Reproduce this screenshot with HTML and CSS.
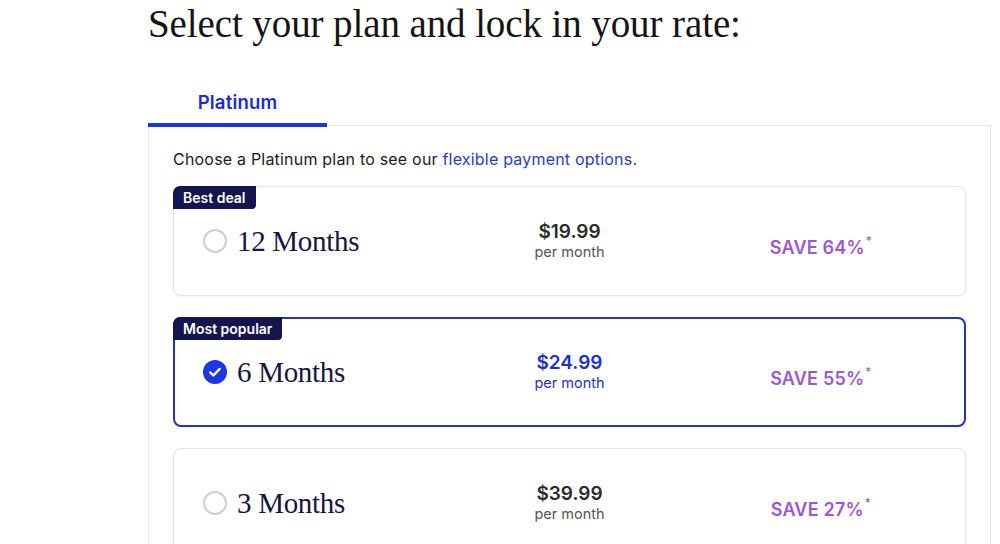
FILE: index.html
```html
<!DOCTYPE html>
<html lang="en">
<head>
<meta charset="utf-8">
<title>Select your plan</title>
<link rel="stylesheet" href="styles.css">
</head>
<body>
<main class="page">
  <h1 class="title">Select your plan and lock in your rate:</h1>
  <div class="tabs">
    <div class="tab tab-active">Platinum</div>
  </div>
  <section class="panel">
    <p class="intro">Choose a Platinum plan to see our <a class="link" href="#">flexible payment options.</a></p>

    <div class="card">
      <span class="badge">Best deal</span>
      <div class="term">
        <span class="radio"></span>
        <span class="term-label">12 Months</span>
      </div>
      <div class="price">
        <div class="amount">$19.99</div>
        <div class="per">per month</div>
      </div>
      <div class="save">SAVE 64%<sup class="star">*</sup></div>
    </div>

    <div class="card card-selected">
      <span class="badge">Most popular</span>
      <div class="term">
        <span class="radio radio-checked">
          <svg viewBox="0 0 24 24" width="24" height="24" aria-hidden="true">
            <circle cx="12" cy="12" r="12" fill="#1b36e3"/>
            <path d="M7.2 12.4l3.2 3.1 6.3-6.6" fill="none" stroke="#fff" stroke-width="2.4" stroke-linecap="round" stroke-linejoin="round"/>
          </svg>
        </span>
        <span class="term-label">6 Months</span>
      </div>
      <div class="price">
        <div class="amount">$24.99</div>
        <div class="per">per month</div>
      </div>
      <div class="save">SAVE 55%<sup class="star">*</sup></div>
    </div>

    <div class="card">
      <div class="term">
        <span class="radio"></span>
        <span class="term-label">3 Months</span>
      </div>
      <div class="price">
        <div class="amount">$39.99</div>
        <div class="per">per month</div>
      </div>
      <div class="save">SAVE 27%<sup class="star">*</sup></div>
    </div>
  </section>
</main>
</body>
</html>
```

FILE: styles.css
```css
* { box-sizing: border-box; }

html, body {
  margin: 0;
  padding: 0;
  background: #ffffff;
  overflow: hidden;
}

body {
  font-family: Inter, "Liberation Sans", Arial, sans-serif;
  color: #1b1b1b;
}

.page {
  padding-left: 148px;
  width: 991px;
}

.title {
  margin: 0;
  font-family: "Liberation Serif", "Times New Roman", serif;
  font-weight: 400;
  font-size: 39px;
  line-height: 48px;
  letter-spacing: -0.1px;
  color: #141414;
}

.tabs {
  display: flex;
  margin-top: 42px;
  position: relative;
  z-index: 1;
}

.tab {
  width: 179px;
  text-align: center;
  font-size: 18.5px;
  line-height: 24px;
  font-weight: 600;
  letter-spacing: 0.2px;
  padding-bottom: 9px;
  border-bottom: 4px solid transparent;
}

.tab-active {
  color: #1b2bd8;
  border-bottom-color: #1a33e4;
}

.panel {
  margin-top: -2px;
  border: 1px solid #e8e8e8;
  border-bottom: none;
  padding: 23px 24px 0 24px;
  height: 420px;
}

.intro {
  margin: 0 0 17px 0;
  font-size: 16px;
  line-height: 20px;
  letter-spacing: 0.2px;
  color: #1c1c1c;
}

.link {
  color: #2a3bd0;
  text-decoration: none;
}

.card {
  position: relative;
  display: grid;
  grid-template-columns: 1fr 1fr 1fr;
  align-items: center;
  height: 110px;
  padding: 0 29px;
  margin-bottom: 21px;
  border: 1px solid #e4e4e4;
  border-radius: 8px;
  background: #fff;
  box-shadow: 0 1px 3px rgba(0, 0, 0, 0.06);
}

.card-selected {
  border: 2px solid #2433bf;
  box-shadow: none;
  padding: 0 28px;
}

.badge {
  position: absolute;
  top: -1px;
  left: -1px;
  height: 23px;
  padding: 0 10px;
  background: #14164f;
  color: #fff;
  font-size: 14px;
  font-weight: 600;
  line-height: 23px;
  border-radius: 7px 0 4px 0;
}

.card-selected .badge {
  top: -2px;
  left: -2px;
}

.term {
  display: flex;
  align-items: center;
  gap: 10px;
}

.radio {
  width: 24px;
  height: 24px;
  border: 2px solid #cfcfcf;
  border-radius: 50%;
  flex: 0 0 24px;
}

.radio-checked {
  border: none;
  display: block;
}

.radio-checked svg {
  display: block;
}

.term-label {
  font-family: "Liberation Serif", "Times New Roman", serif;
  font-size: 29px;
  line-height: 34px;
  color: #15173f;
  letter-spacing: -0.3px;
}

.price {
  text-align: center;
}

.amount {
  font-size: 19px;
  line-height: 22px;
  font-weight: 600;
  color: #2b2b2b;
}

.per {
  font-size: 14.5px;
  line-height: 18px;
  color: #555;
}

.card-selected .amount,
.card-selected .per {
  color: #1f2fcf;
}

.save {
  text-align: center;
  font-size: 18px;
  font-weight: 600;
  letter-spacing: 0.2px;
  color: #9c58d4;
  padding-top: 12px;
  padding-left: 14px;
}

.star {
  font-size: 12px;
  font-weight: 400;
  color: #8a6aa8;
  vertical-align: top;
  position: relative;
  top: -4px;
  margin-left: 1px;
}
```
